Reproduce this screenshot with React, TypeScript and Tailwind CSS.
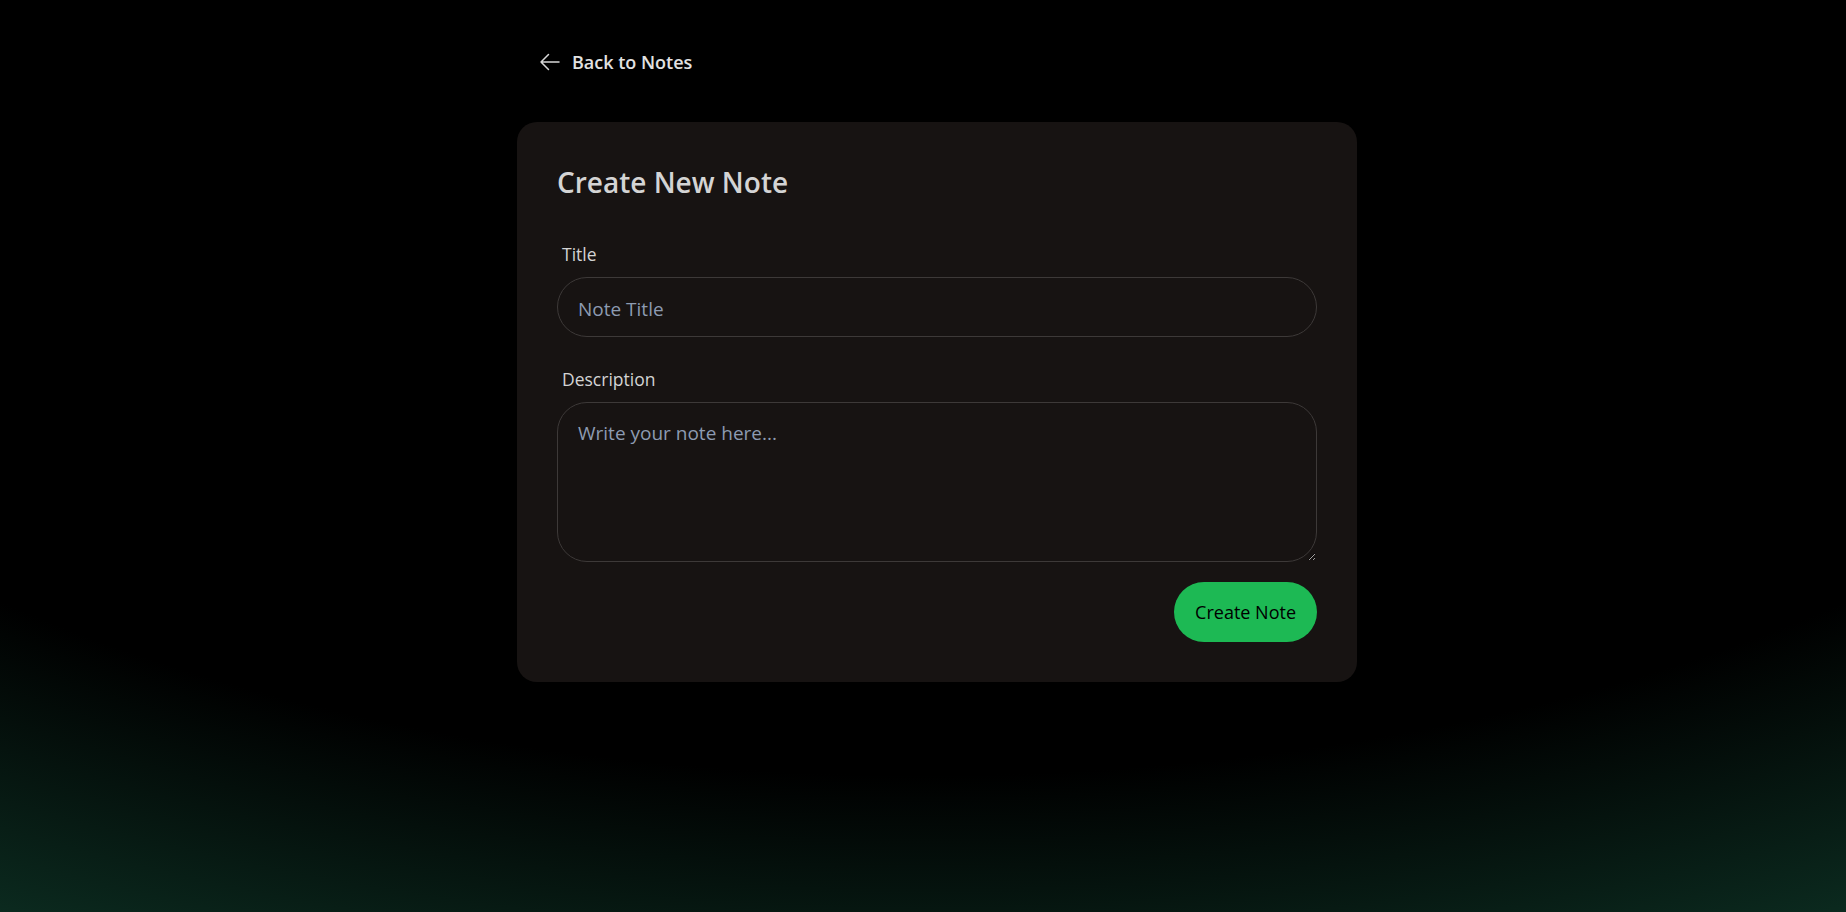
import React, { useState } from 'react';

function ArrowLeftIcon({ className }: { className?: string }) {
  return (
    <svg
      xmlns="http://www.w3.org/2000/svg"
      viewBox="0 0 24 24"
      fill="none"
      stroke="currentColor"
      strokeWidth={1.5}
      className={className}
    >
      <path strokeLinecap="round" strokeLinejoin="round" d="M10.5 19.5 3 12m0 0 7.5-7.5M3 12h18" />
    </svg>
  );
}

export default function App() {
  const [title, setTitle] = useState('');
  const [description, setDescription] = useState('');

  return (
    <div className="relative min-h-screen w-full overflow-hidden bg-black font-['Open_Sans',sans-serif] [background:radial-gradient(125%_125%_at_50%_10%,#000_60%,#144b37_100%)]">
      <div className="flex justify-center pl-[28px] pt-[39px]">
        <div className="w-[840px]">
          {/* Back link */}
          <button className="flex items-center gap-[10px] px-[21px] py-[10px] text-[18px] leading-[26px] font-semibold text-[#e2e2e2] hover:text-white transition-colors">
            <ArrowLeftIcon className="h-6 w-6 text-[#d8d8d8]" />
            <span>Back to Notes</span>
          </button>

          {/* Form card */}
          <div className="mt-[37px] rounded-[20px] bg-[#171312] p-[40px]">
            <h1 className="mb-[39px] text-[28px] leading-[40px] font-semibold text-[#d4d4d4]">
              Create New Note
            </h1>

            <div className="flex flex-col gap-[29px]">
              <div className="flex flex-col">
                <label className="mb-[10px] pl-[5px] text-[17.5px] leading-[26px] text-[#d4d4d4]">
                  Title
                </label>
                <input
                  value={title}
                  onChange={(e) => setTitle(e.target.value)}
                  placeholder="Note Title"
                  className="h-[60px] w-full rounded-full border border-[#3d3938] bg-[#171312] px-[20px] pt-[3px] text-[19px] text-[#e5e5e5] placeholder:text-[#8d9bb1] outline-none focus:border-[#1db954]"
                />
              </div>

              <div className="flex flex-col">
                <label className="mb-[10px] pl-[5px] text-[17.5px] leading-[26px] text-[#d4d4d4]">
                  Description
                </label>
                <textarea
                  value={description}
                  onChange={(e) => setDescription(e.target.value)}
                  placeholder="Write your note here..."
                  className="h-[160px] w-full rounded-[30px] border border-[#3d3938] bg-[#171312] px-[20px] pt-[15px] text-[19px] leading-[30px] text-[#e5e5e5] placeholder:text-[#8d9bb1] outline-none focus:border-[#1db954]"
                />
              </div>
            </div>

            <div className="mt-[20px] flex justify-end">
              <button className="h-[60px] rounded-full bg-[#1db954] px-[21px] text-[18px] font-medium text-black hover:bg-[#1ed760] transition-colors">
                Create Note
              </button>
            </div>
          </div>
        </div>
      </div>
    </div>
  );
}
